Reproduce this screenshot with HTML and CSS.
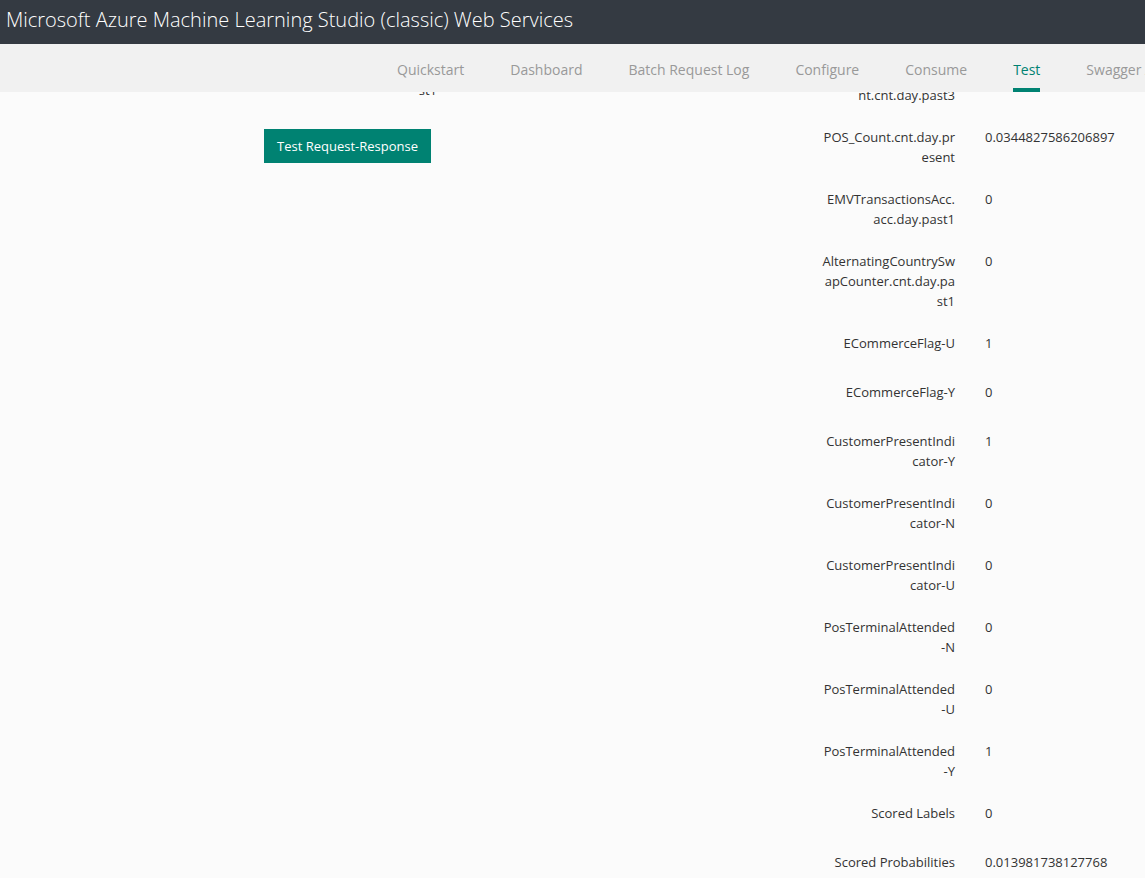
FILE: index.html
```html
<!DOCTYPE html>
<html lang="en">
<head>
<meta charset="utf-8">
<title>Microsoft Azure Machine Learning Studio (classic) Web Services</title>
<link rel="stylesheet" href="styles.css">
</head>
<body>
<header class="topbar"><h1 class="brand">Microsoft Azure Machine Learning Studio (classic) Web Services</h1></header>
<nav class="tabs">
  <a class="tab" href="#quickstart">Quickstart</a>
  <a class="tab" href="#dashboard">Dashboard</a>
  <a class="tab" href="#log">Batch Request Log</a>
  <a class="tab" href="#configure">Configure</a>
  <a class="tab" href="#consume">Consume</a>
  <a class="tab tab-active" href="#test" aria-current="page">Test</a>
  <a class="tab" href="#swagger">Swagger API</a>
</nav>
<main class="viewport">
  <div class="content">
    <form class="inputs">
      <div class="input-name">st1</div>
      <button class="submit" type="button">Test Request-Response</button>
    </form>
    <dl class="results">
      <div class="row"><dt class="name">nt.cnt.day.past3</dt><dd class="value"></dd></div>
      <div class="row"><dt class="name">POS_Count.cnt.day.pr<br>esent</dt><dd class="value">0.0344827586206897</dd></div>
      <div class="row"><dt class="name">EMVTransactionsAcc.<br>acc.day.past1</dt><dd class="value">0</dd></div>
      <div class="row"><dt class="name">AlternatingCountrySw<br>apCounter.cnt.day.pa<br>st1</dt><dd class="value">0</dd></div>
      <div class="row"><dt class="name">ECommerceFlag-U</dt><dd class="value">1</dd></div>
      <div class="row"><dt class="name">ECommerceFlag-Y</dt><dd class="value">0</dd></div>
      <div class="row"><dt class="name">CustomerPresentIndi<br>cator-Y</dt><dd class="value">1</dd></div>
      <div class="row"><dt class="name">CustomerPresentIndi<br>cator-N</dt><dd class="value">0</dd></div>
      <div class="row"><dt class="name">CustomerPresentIndi<br>cator-U</dt><dd class="value">0</dd></div>
      <div class="row"><dt class="name">PosTerminalAttended<br>-N</dt><dd class="value">0</dd></div>
      <div class="row"><dt class="name">PosTerminalAttended<br>-U</dt><dd class="value">0</dd></div>
      <div class="row"><dt class="name">PosTerminalAttended<br>-Y</dt><dd class="value">1</dd></div>
      <div class="row"><dt class="name">Scored Labels</dt><dd class="value">0</dd></div>
      <div class="row"><dt class="name">Scored Probabilities</dt><dd class="value">0.013981738127768</dd></div>
    </dl>
  </div>
</main>
</body>
</html>
```
FILE: styles.css
```css
* { box-sizing: border-box; }

body {
  margin: 0;
  height: 100vh;
  display: flex;
  flex-direction: column;
  overflow: hidden;
  background: #fbfbfb;
  color: #333;
  font: 13px/20px "Open Sans", "Noto Sans", sans-serif;
}

.topbar {
  flex: none;
  padding: 6px 6px 10px;
  background: #343a42;
}

.brand {
  margin: 0;
  color: #fff;
  font-size: 20px;
  font-weight: 300;
  line-height: 28px;
  white-space: nowrap;
}

.tabs {
  flex: none;
  display: flex;
  gap: 46px;
  height: 48px;
  padding-left: 397px;
  overflow: hidden;
  background: #f1f1f1;
}

.tab {
  flex: none;
  padding-top: 16px;
  border-bottom: 4px solid transparent;
  color: #999;
  font-size: 14px;
  text-decoration: none;
  white-space: nowrap;
}

.tab-active {
  border-color: #008272;
  color: #008272;
}

.viewport {
  flex: 1;
  min-height: 0;
  overflow: hidden;
}

/* The content is scrolled up beneath the tabs. */
.content {
  display: flex;
  justify-content: space-between;
  margin-top: -14px;
}

.inputs {
  padding-left: 264px;
}

.input-name {
  width: 173px;
  padding: 2px 0 29px;
  text-align: right;
}

.submit {
  height: 34px;
  padding: 0 13px;
  border: 0;
  background: #008272;
  color: #fff;
  font: inherit;
}

.results {
  width: 330px;
  margin: 0;
}

.row {
  display: grid;
  grid-template-columns: 140px 1fr;
  gap: 30px;
  min-height: 34px;
  margin-bottom: 15px;
  padding-top: 7px;
}

.row:first-child {
  min-height: 27px;
}

.name {
  text-align: right;
  white-space: nowrap;
}

.value {
  margin: 0;
}
```
